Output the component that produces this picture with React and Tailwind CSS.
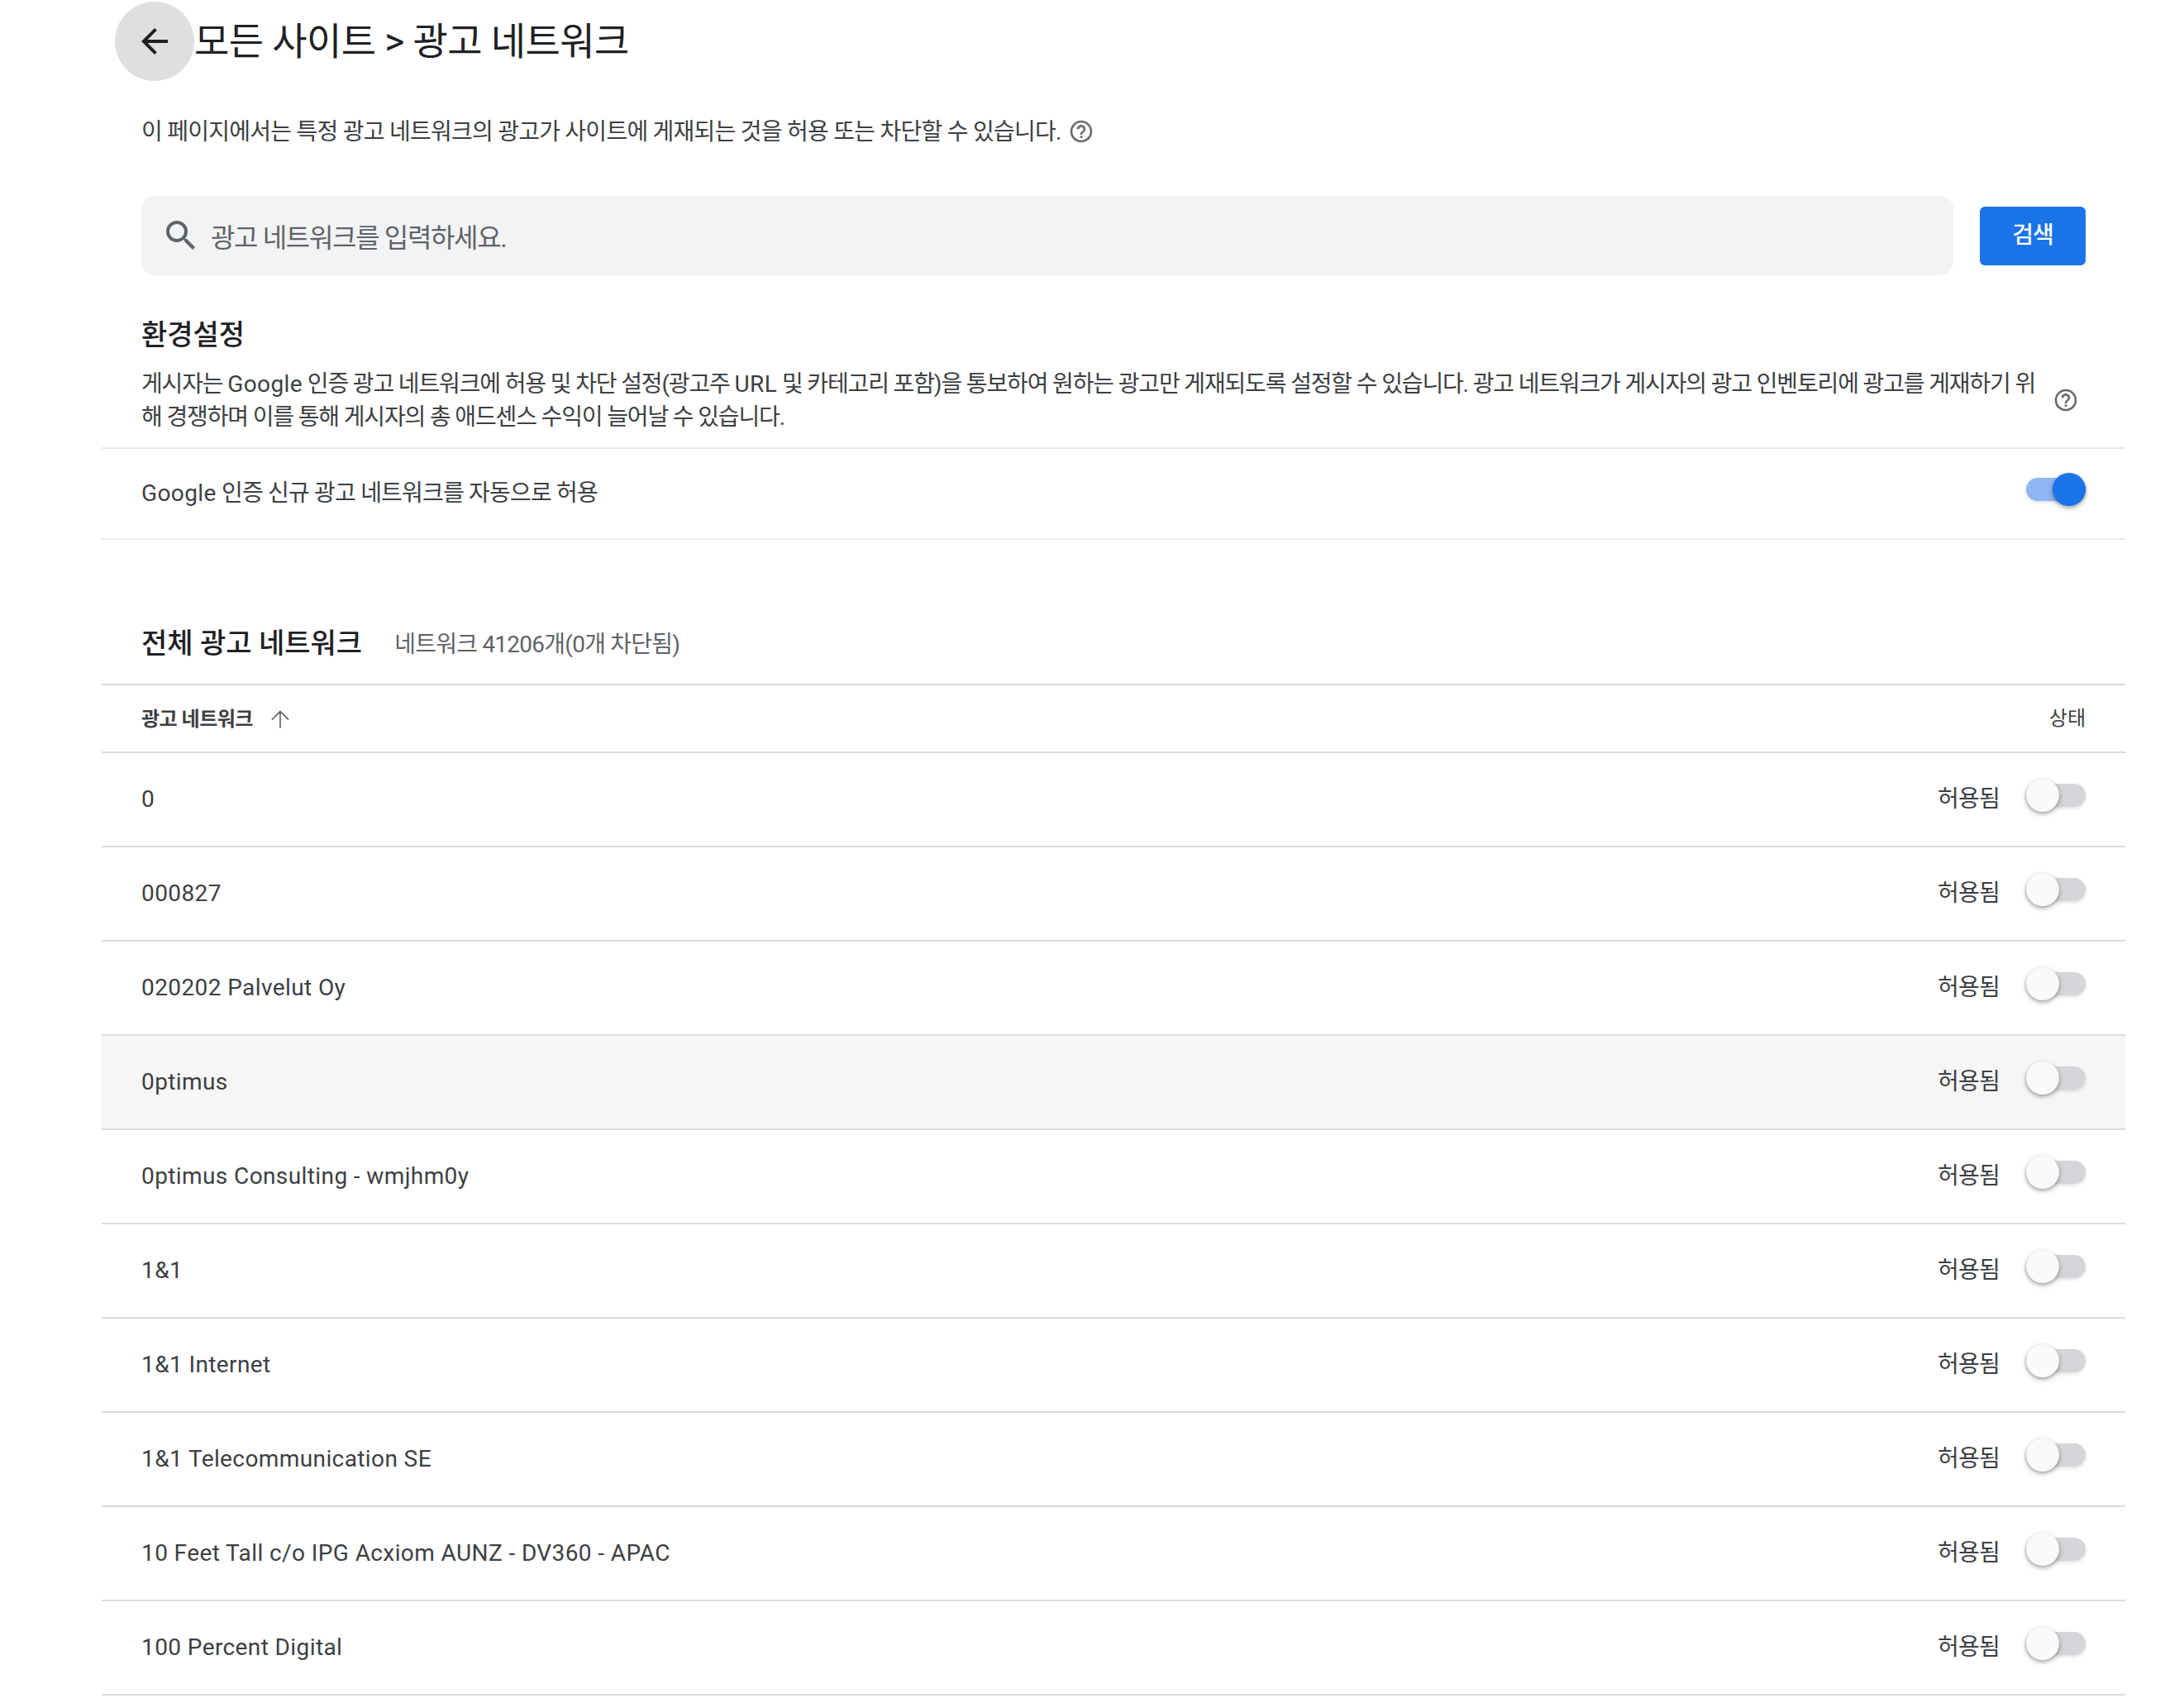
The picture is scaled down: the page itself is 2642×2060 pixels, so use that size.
import React from "react";

const FONT = "font-['Roboto','Noto_Sans_CJK_KR',sans-serif]";

function Help({ className }) {
  return (
    <svg viewBox="0 0 24 24" className={className} fill="#6b6b6b">
      <path d="M11 18h2v-2h-2v2zm1-16C6.48 2 2 6.48 2 12s4.48 10 10 10 10-4.48 10-10S17.52 2 12 2zm0 18c-4.41 0-8-3.59-8-8s3.59-8 8-8 8 3.59 8 8-3.59 8-8 8zm0-14c-2.21 0-4 1.79-4 4h2c0-1.1.9-2 2-2s2 .9 2 2c0 2-3 1.75-3 5h2c0-2.25 3-2.5 3-5 0-2.21-1.79-4-4-4z" />
    </svg>
  );
}

function Toggle({ on }) {
  return (
    <div className="relative h-[40px] w-[72px] shrink-0">
      <div className={`absolute left-0 top-[6px] h-[28px] w-[72px] rounded-full shadow-[0_2px_4px_rgba(0,0,0,0.12)] ${on ? "bg-[#8fb6f2]" : "bg-[#d5d6da]"}`} />
      <div
        className={`absolute top-0 h-[40px] w-[40px] rounded-full shadow-[0_2px_4px_rgba(0,0,0,0.3),0_3px_8px_rgba(0,0,0,0.12)] ${on ? "right-0 bg-[#1a73e8]" : "left-0 bg-[#fafafa]"}`}
      />
    </div>
  );
}

const rows = [
  "0",
  "000827",
  "020202 Palvelut Oy",
  "0ptimus",
  "0ptimus Consulting - wmjhm0y",
  "1&1",
  "1&1 Internet",
  "1&1 Telecommunication SE",
  "10 Feet Tall c/o IPG Acxiom AUNZ - DV360 - APAC",
  "100 Percent Digital",
];

export default function App() {
  return (
    <div className={`${FONT} h-[2060px] w-[2642px] overflow-hidden bg-white text-[#3c4043]`}>
      <div className="ml-[123px] w-[2448px]">
        <div className="flex h-[100px] items-center pl-[16px]">
          <div className="flex h-[96px] w-[96px] shrink-0 items-center justify-center rounded-full bg-[#dfdfdf]">
            <svg viewBox="0 0 24 24" className="h-[48px] w-[48px]" fill="#202124">
              <path d="M20 11H7.83l5.59-5.59L12 4l-8 8 8 8 1.41-1.41L7.83 13H20v-2z" />
            </svg>
          </div>
          <h1 className="text-[46px] font-normal leading-[56px] tracking-[-0.6px] text-[#202124]">모든 사이트 &gt; 광고 네트워크</h1>
        </div>

        <div className="mt-[40px] flex items-center pl-[48px] text-[28px] leading-[40px]">
          <span className="tracking-[-0.75px]">이 페이지에서는 특정 광고 네트워크의 광고가 사이트에 게재되는 것을 허용 또는 차단할 수 있습니다.</span>
          <Help className="mb-[2px] ml-[8px] h-[32px] w-[32px]" />
        </div>

        <div className="mt-[57px] flex items-center pl-[48px] pr-[48px]">
          <div className="flex h-[96px] flex-1 items-center rounded-[16px] bg-[#f1f3f4] pl-[24px]">
            <svg viewBox="0 0 24 24" className="h-[48px] w-[48px] shrink-0" fill="#5f6368">
              <path d="M15.5 14h-.79l-.28-.27A6.471 6.471 0 0 0 16 9.5 6.5 6.5 0 1 0 9.5 16c1.61 0 3.09-.59 4.23-1.57l.27.28v.79l5 4.99L20.49 19l-4.99-5zm-6 0C7.01 14 5 11.99 5 9.5S7.01 5 9.5 5 14 7.01 14 9.5 11.99 14 9.5 14z" />
            </svg>
            <span className="ml-[12px] pt-[6px] text-[32px] leading-[40px] tracking-[-1.35px] text-[#5f6368]">광고 네트워크를 입력하세요.</span>
          </div>
          <button className="ml-[32px] flex h-[71px] w-[128px] items-center justify-center rounded-[6px] bg-[#1a73e8] text-[28px] font-medium tracking-[-1px] text-white">검색</button>
        </div>

        <h2 className="ml-[48px] mt-[50px] text-[34px] font-medium leading-[44px] text-[#202124]">환경설정</h2>

        <div className="flex items-center pl-[48px] pr-[48px] pt-[18px] text-[28px] leading-[40px]">
          <p className="w-[2300px] break-all tracking-[-1.15px]">
            게시자는 <span className="tracking-[0.4px]">Google</span> 인증 광고 네트워크에 허용 및 차단 설정(광고주 <span className="tracking-[0.4px]">URL</span> 및 카테고리 포함)을 통보하여 원하는 광고만 게재되도록 설정할 수 있습니다. 광고 네트워크가 게시자의 광고 인벤토리에 광고를 게재하기 위해 경쟁하며 이를 통해 게시자의 총 애드센스 수익이 늘어날 수 있습니다.
          </p>
          <Help className="mb-[2px] ml-auto mr-[8px] h-[32px] w-[32px]" />
        </div>

        <div className="mt-[16px] box-content flex h-[108px] items-center justify-between border-y-2 border-[#e8e8ee] pl-[48px] pr-[48px]">
          <span className="text-[28px] leading-[40px] tracking-[-0.8px]"><span className="tracking-[0.4px]">Google</span> 인증 신규 광고 네트워크를 자동으로 허용</span>
          <div className="-mt-[11px]"><Toggle on /></div>
        </div>

        <div className="mb-[19px] mt-[95px] flex h-[60px] items-center pl-[48px]">
          <h2 className="text-[34px] font-medium leading-[48px] text-[#202124]">전체 광고 네트워크</h2>
          <span className="ml-[39px] mt-[4px] text-[28px] leading-[40px] tracking-[-0.75px] text-[#5f6368]">네트워크 41206개(0개 차단됨)</span>
        </div>

        <div className="box-content flex h-[80px] items-center justify-between border-y-2 border-[#dadce0] pl-[48px] pr-[48px]">
          <div className="mt-[2px] flex items-center">
            <span className="text-[24px] font-semibold leading-[32px] tracking-[-0.5px]">광고 네트워크</span>
            <svg viewBox="0 0 24 24" className="ml-[17px] h-[32px] w-[32px]" fill="#5f6368">
              <path d="M4 12l.9.9L11.4 6.4V20h1.2V6.4l6.5 6.5.9-.9-8-8-8 8z" />
            </svg>
          </div>
          <span className="text-[24px] leading-[32px]">상태</span>
        </div>

        {rows.map((name, i) => (
          <div
            key={name}
            className={`box-content flex h-[112px] items-center justify-between border-b-2 border-[#dadce0] pl-[48px] pr-[48px] ${i === 3 ? "bg-[#f6f6f6]" : ""}`}
          >
            <span className="text-[28px] leading-[40px] tracking-[0.4px]">{name}</span>
            <div className="flex items-center">
              <span className="mr-[32px] text-[28px] leading-[40px] tracking-[-0.8px]">허용됨</span>
              <div className="-mt-[11px]"><Toggle /></div>
            </div>
          </div>
        ))}
      </div>
    </div>
  );
}
